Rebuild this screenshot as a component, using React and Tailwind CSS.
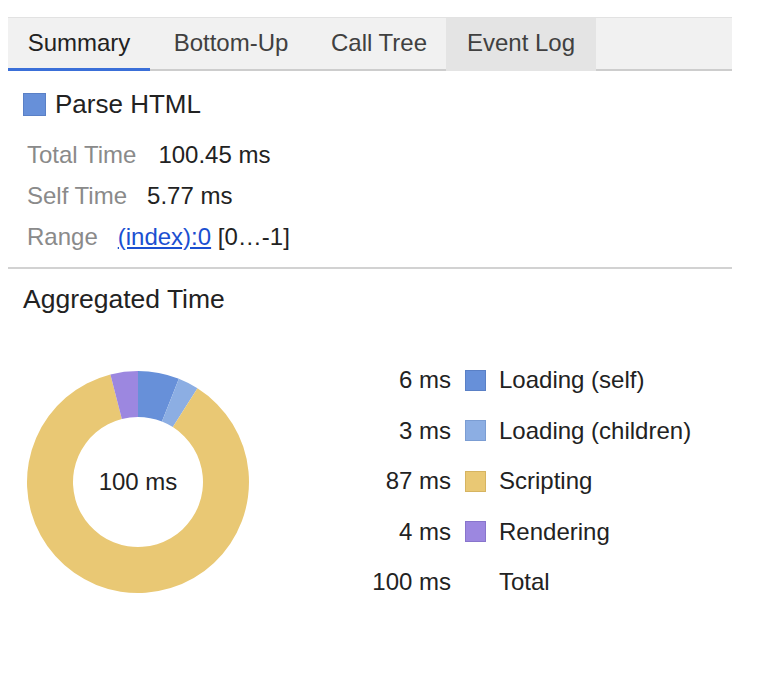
const segments = [
  { ms: 6, label: 'Loading (self)', color: '#6790d9', border: '#5a80c6' },
  { ms: 3, label: 'Loading (children)', color: '#8caee3', border: '#7b9dd3' },
  { ms: 87, label: 'Scripting', color: '#e9c874', border: '#d6b461' },
  { ms: 4, label: 'Rendering', color: '#9c87e0', border: '#8875cc' },
]

function arc(cx, cy, r1, r2, a0, a1) {
  const p = (r, a) => [cx + r * Math.sin(a), cy - r * Math.cos(a)]
  const large = a1 - a0 > Math.PI ? 1 : 0
  const [x0, y0] = p(r2, a0)
  const [x1, y1] = p(r2, a1)
  const [x2, y2] = p(r1, a1)
  const [x3, y3] = p(r1, a0)
  return `M${x0} ${y0} A${r2} ${r2} 0 ${large} 1 ${x1} ${y1} L${x2} ${y2} A${r1} ${r1} 0 ${large} 0 ${x3} ${y3} Z`
}

function Donut() {
  const total = segments.reduce((s, x) => s + x.ms, 0)
  let start = 0
  return (
    <div className="relative w-[224px] h-[224px] mt-[15px] ml-[18px] shrink-0">
      <svg width="224" height="224" viewBox="0 0 224 224">
        {segments.map((s) => {
          const a0 = (start / total) * Math.PI * 2
          start += s.ms
          const a1 = (start / total) * Math.PI * 2
          return <path key={s.label} d={arc(112, 112, 65, 111, a0, a1)} fill={s.color} />
        })}
      </svg>
      <div className="absolute inset-0 flex items-center justify-center text-[24px] text-[#222]">100 ms</div>
    </div>
  )
}

function Tab({ children, active, hover, w }) {
  return (
    <div
      className={
        'flex items-center justify-center -mb-[2px] border-b-[3px] ' +
        w +
        (active ? ' border-[#3a6fd8] text-[#222]' : ' border-transparent text-[#404040]') +
        (hover ? ' bg-[#e4e4e4]' : '')
      }
    >
      {children}
    </div>
  )
}

export default function App() {
  return (
    <div className="min-h-screen bg-white" style={{ fontFamily: '"Liberation Sans", Arial, sans-serif' }}>
      <div className="w-[724px] ml-[8px] pt-[17px]">
        {/* tabs */}
        <div className="flex h-[54px] border-t border-b-2 border-t-[#e2e2e2] border-b-[#cdcdcd] bg-[#f1f1f1] text-[24px]">
          <Tab active w="w-[142px]">Summary</Tab>
          <Tab w="w-[162px]">Bottom-Up</Tab>
          <Tab w="w-[134px]">Call Tree</Tab>
          <Tab hover w="w-[150px]">Event Log</Tab>
        </div>

        <div className="flex items-center h-[30px] mt-[18px] pl-[15px] gap-[9px]">
          <span className="w-[23px] h-[23px] bg-[#6790d9] border border-[#5a80c6]" />
          <span className="text-[26px] text-[#222]">Parse HTML</span>
        </div>

        <div className="mt-[15px] pl-[19px] text-[24px]">
          <div className="flex items-center h-[41px] gap-[22px]">
            <span className="text-[#8a8a8a]">Total Time</span>
            <span className="text-[#222]">100.45 ms</span>
          </div>
          <div className="flex items-center h-[41px] gap-[20px]">
            <span className="text-[#8a8a8a]">Self Time</span>
            <span className="text-[#222]">5.77 ms</span>
          </div>
          <div className="flex items-center h-[41px] gap-[20px]">
            <span className="text-[#8a8a8a]">Range</span>
            <span className="text-[#222]">
              <a className="text-[#1b4fd1] underline">(index):0</a> [0…-1]
            </span>
          </div>
        </div>

        <div className="mt-[10px] h-[2px] bg-[#d2d2d2]" />

        <div className="flex items-center h-[30px] mt-[16px] pl-[15px] text-[26.5px] text-[#222]">Aggregated Time</div>

        <div className="flex items-start mt-[40px]">
          <Donut />
          <div className="ml-[110px] text-[24px] text-[#222]">
            {segments.map((s) => (
              <div key={s.label} className="flex items-center h-[50.5px]">
                <span className="w-[91px] text-right">{s.ms} ms</span>
                <span
                  className="w-[21px] h-[21px] ml-[14px] border"
                  style={{ background: s.color, borderColor: s.border }}
                />
                <span className="ml-[13px]">{s.label}</span>
              </div>
            ))}
            <div className="flex items-center h-[50.5px]">
              <span className="w-[91px] text-right">100 ms</span>
              <span className="ml-[48px]">Total</span>
            </div>
          </div>
        </div>
      </div>
    </div>
  )
}
